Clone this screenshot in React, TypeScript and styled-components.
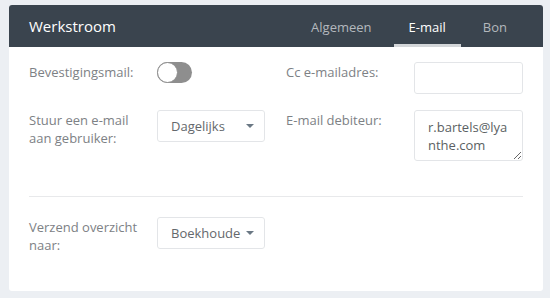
import styled, { createGlobalStyle } from "styled-components";

const GlobalStyle = createGlobalStyle`
    html, body {
        margin: 0;
        padding: 0;
        background: #eceff3;
        font-family: "Open Sans", "Noto Sans", sans-serif;
    }
`;

type FieldProps = { label: React.ReactNode; children: React.ReactNode };

const Field = ({ label, children }: FieldProps) => (
    <FieldBox>
        <Label>{label}</Label>
        {children}
    </FieldBox>
);

const App = () => {
    return (
        <Page>
            <GlobalStyle />
            <Card>
                <Header>
                    <Title>Werkstroom</Title>
                    <Tabs>
                        <Tab>Algemeen</Tab>
                        <Tab $active>E-mail</Tab>
                        <Tab>Bon</Tab>
                    </Tabs>
                </Header>
                <Body>
                    <Grid>
                        <Field label="Bevestigingsmail:">
                            <Toggle>
                                <Knob />
                            </Toggle>
                        </Field>
                        <Field label="Cc e-mailadres:">
                            <TextInput />
                        </Field>
                        <Field label={<>Stuur een e-mail<br />aan gebruiker:</>}>
                            <Select>
                                <span>Dagelijks</span>
                                <Caret />
                            </Select>
                        </Field>
                        <Field label="E-mail debiteur:">
                            <TextArea readOnly defaultValue="r.bartels@lyanthe.com" />
                        </Field>
                    </Grid>
                    <Divider />
                    <Grid>
                        <Field label={<>Verzend overzicht<br />naar:</>}>
                            <Select>
                                <span>Boekhoude</span>
                                <Caret />
                            </Select>
                        </Field>
                    </Grid>
                </Body>
            </Card>
        </Page>
    );
};

const Page = styled.div`
    padding: 5px 7px 7px 9px;
`;

const Card = styled.div`
    background: #fff;
    border-radius: 3px;
    height: 286px;
    overflow: hidden;
`;

const Header = styled.div`
    display: flex;
    align-items: stretch;
    justify-content: space-between;
    height: 42px;
    background: #3a444e;
    padding: 0 21px 0 20px;
`;

const Title = styled.div`
    display: flex;
    align-items: center;
    color: #fff;
    font-size: 15px;
    padding-bottom: 1px;
`;

const Tabs = styled.div`
    display: flex;
    gap: 7px;
`;

const Tab = styled.div<{ $active?: boolean }>`
    display: flex;
    align-items: center;
    padding: 5px 15px 0;
    font-size: 13px;
    color: ${(p) => (p.$active ? "#fff" : "#b3b8bd")};
    border-bottom: 3px solid ${(p) => (p.$active ? "#d3d6d9" : "transparent")};
`;

const Body = styled.div`
    padding: 15px 20px 0;
`;

const Grid = styled.div`
    display: grid;
    grid-template-columns: 236px 237px;
    column-gap: 21px;
    row-gap: 16px;
    align-items: start;
`;

const FieldBox = styled.div`
    display: flex;
    align-items: flex-start;
`;

const Label = styled.div`
    width: 128px;
    flex-shrink: 0;
    padding-top: 1px;
    font-size: 13px;
    line-height: 18px;
    color: #7d8185;
`;

const Toggle = styled.div`
    position: relative;
    width: 35px;
    height: 21px;
    border-radius: 11px;
    background: #8e8e8e;
`;

const Knob = styled.div`
    position: absolute;
    left: 0;
    top: 0;
    width: 19px;
    height: 19px;
    border-radius: 50%;
    background: #fff;
    border: 1px solid #8e8e8e;
`;

const TextInput = styled.div`
    width: 109px;
    height: 32px;
    box-sizing: border-box;
    border: 1px solid #e3e5e8;
    border-radius: 3px;
    background: #fff;
`;

const TextArea = styled.textarea`
    width: 109px;
    height: 51px;
    box-sizing: border-box;
    border: 1px solid #e3e5e8;
    border-radius: 3px;
    padding: 7px 10px 0 13px;
    margin: 0;
    font-family: "Open Sans", "Noto Sans", sans-serif;
    font-size: 13px;
    line-height: 18px;
    color: #5b5f63;
    resize: vertical;
    outline: none;
    overflow: hidden;
`;

const Select = styled.div`
    display: flex;
    align-items: center;
    justify-content: space-between;
    width: 108px;
    height: 32px;
    box-sizing: border-box;
    border: 1px solid #e3e5e8;
    border-radius: 3px;
    padding: 0 10px 0 13px;
    font-size: 13px;
    color: #64686c;
    white-space: nowrap;
    overflow: hidden;
`;

const Caret = styled.span`
    flex-shrink: 0;
    width: 0;
    height: 0;
    margin-left: 6px;
    border-left: 4px solid transparent;
    border-right: 4px solid transparent;
    border-top: 4px solid #6a7884;
`;

const Divider = styled.div`
    height: 1px;
    background: #e8e9eb;
    margin: 35px 0 20px;
`;

export default App;
